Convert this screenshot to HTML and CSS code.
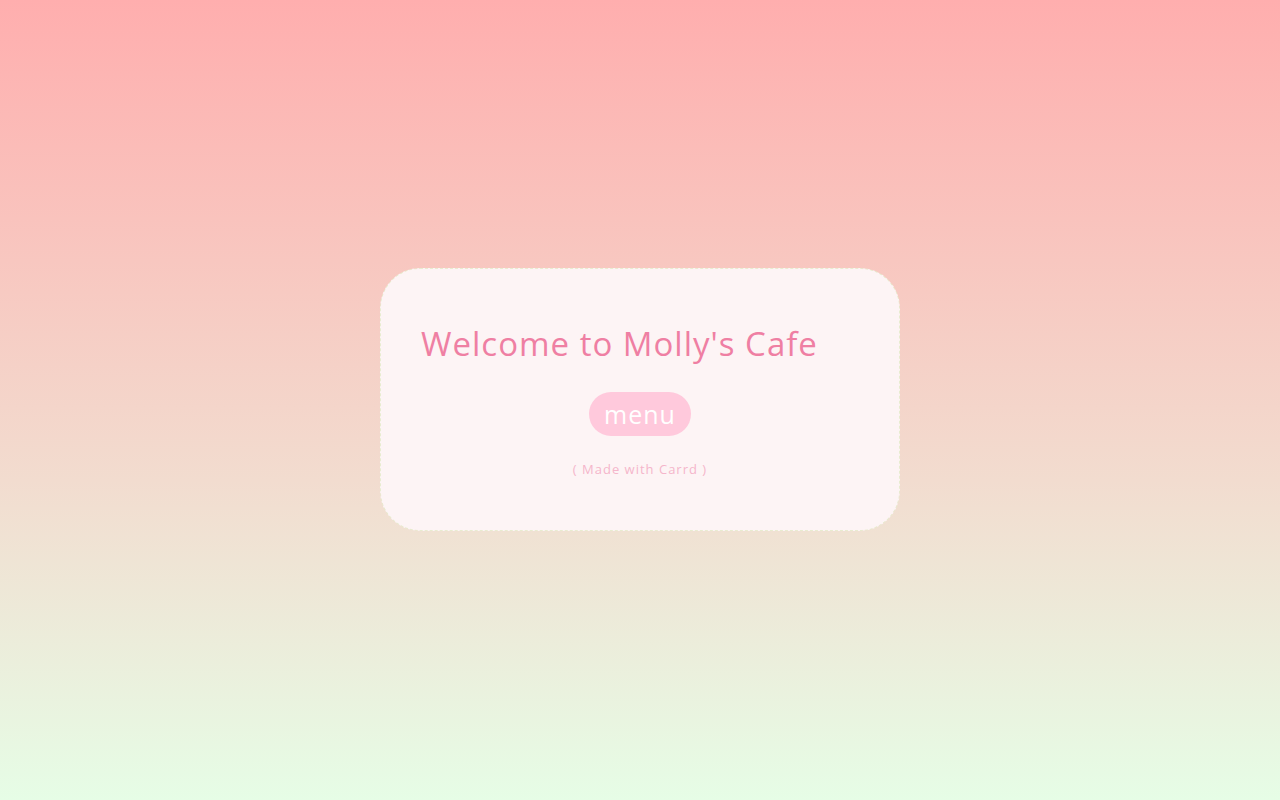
FILE: index.html
```html
<!DOCTYPE html>
<html>
<head>
<meta charset="utf-8">
<link rel="stylesheet" href="styles.css">
</head>
<body>
<main class="page">
  <section class="card">
    <h1 class="title">Welcome to Molly's Cafe</h1>
    <a class="menu-btn" href="#">menu</a>
    <p class="credit">( Made with Carrd )</p>
  </section>
</main>
</body>
</html>
```
FILE: styles.css
```css
html, body {
  margin: 0;
  padding: 0;
  height: 100%;
}
body {
  background: linear-gradient(180deg, #ffaeae 0%, #f2dccf 60%, #e6fde6 100%);
  font-family: "Open Sans", "Liberation Sans", sans-serif;
}
.page {
  height: 800px;
  display: flex;
  align-items: center;
  justify-content: center;
}
.card {
  box-sizing: border-box;
  width: 520px;
  height: 263px;
  margin-top: -1px;
  background: #fdf4f5;
  border: 1px dashed #e8ecd0;
  border-radius: 40px;
  padding: 50px 40px 0;
  display: flex;
  flex-direction: column;
  align-items: center;
}
.title {
  align-self: stretch;
  margin: 0;
  font-weight: 400;
  font-size: 33px;
  line-height: 50px;
  color: #ef7fa3;
  letter-spacing: 1px;
}
.menu-btn {
  margin-top: 23px;
  height: 44px;
  padding: 0 15px;
  border-radius: 22px;
  background: #ffc9dc;
  color: #ffffff;
  font-size: 25px;
  line-height: 44px;
  text-decoration: none;
  letter-spacing: 1px;
}
.credit {
  margin: 22px 0 0;
  font-size: 13px;
  line-height: 22px;
  color: #f5b6cb;
  letter-spacing: 1px;
}
```
